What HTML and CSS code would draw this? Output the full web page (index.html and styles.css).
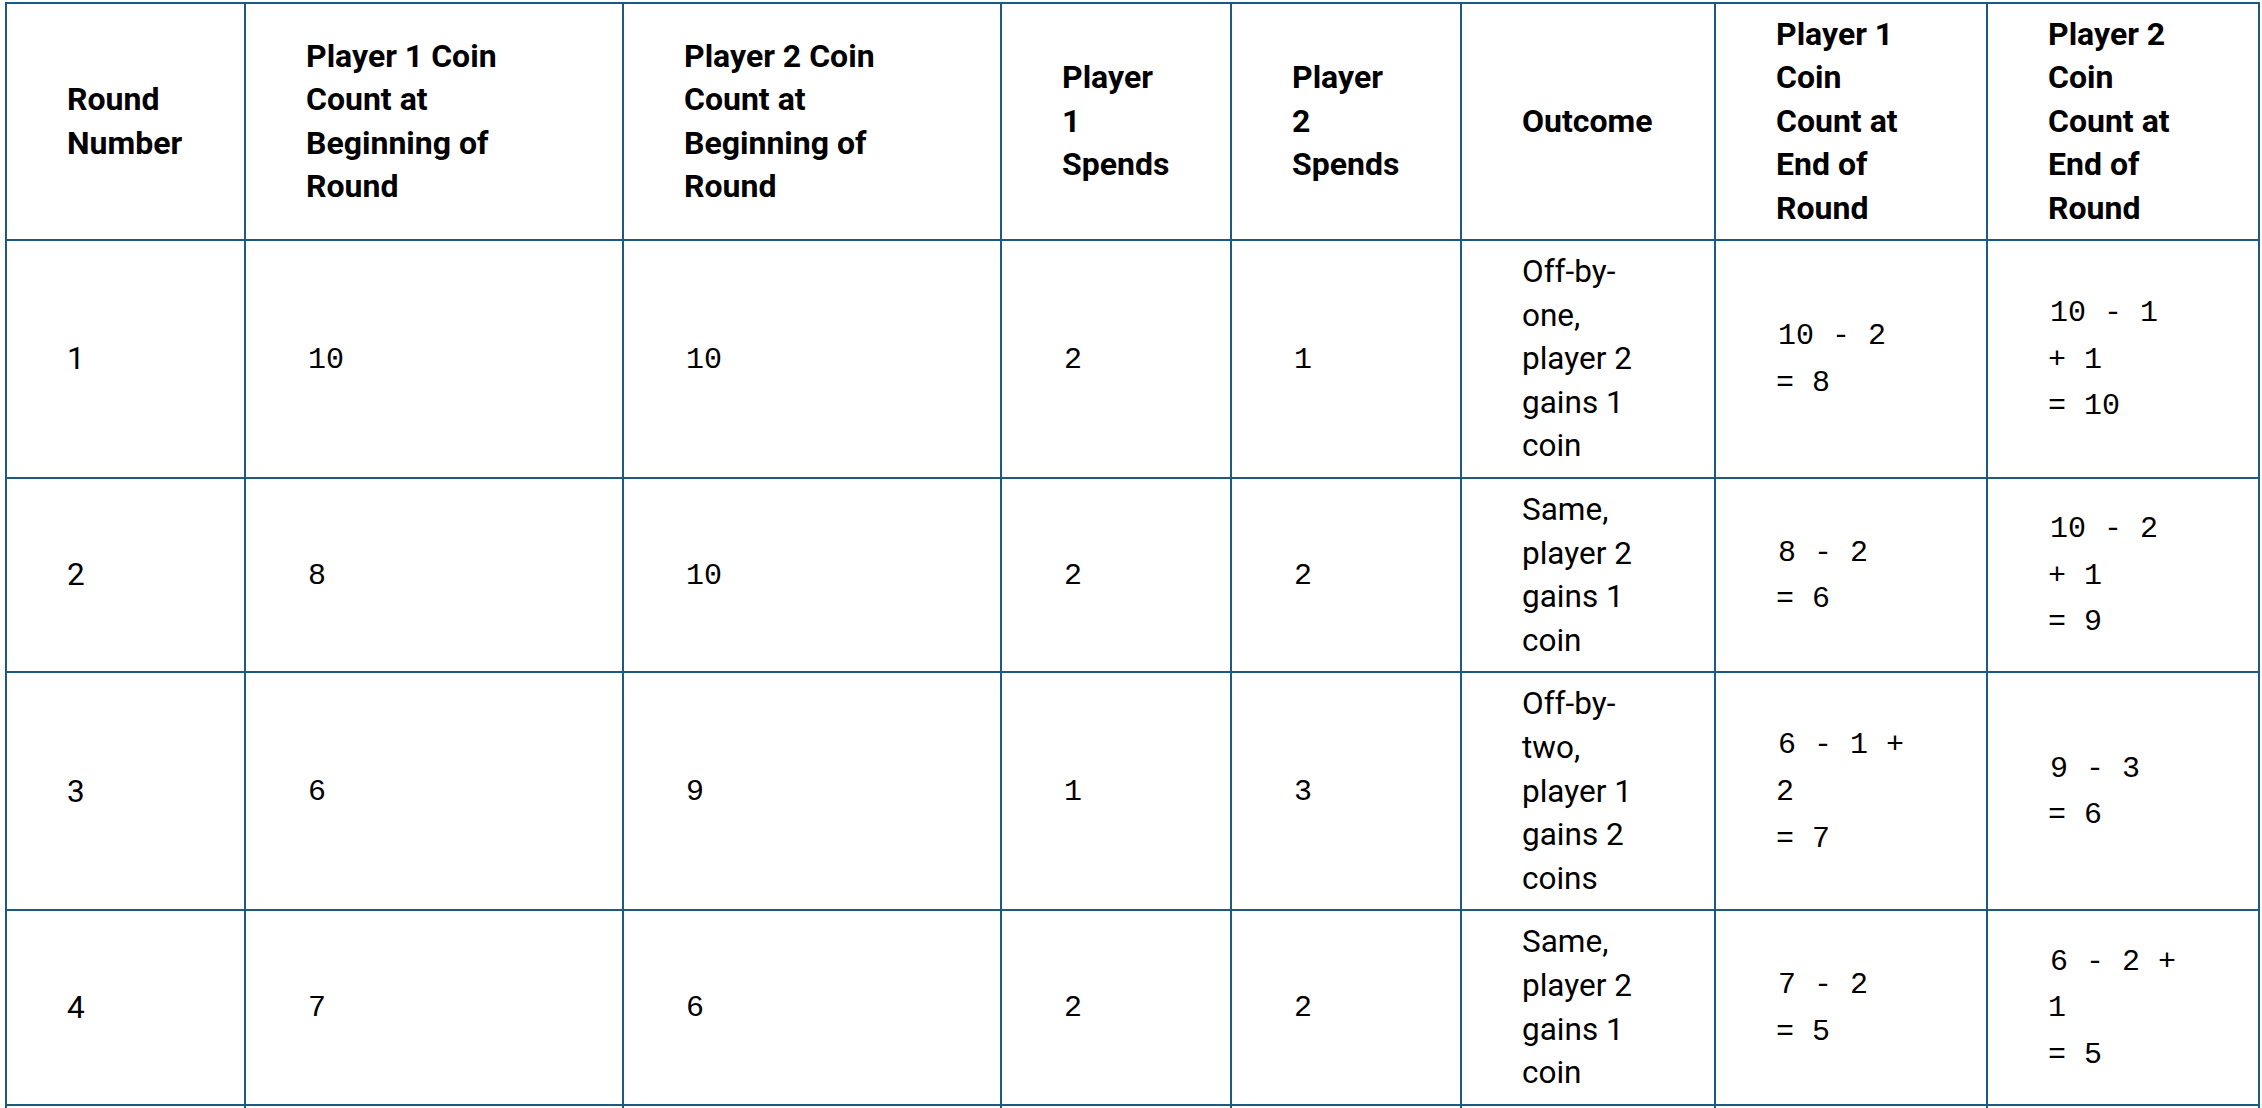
FILE: index.html
```html
<!DOCTYPE html>
<html lang="en">
<head>
<meta charset="utf-8">
<title>Coin rounds</title>
<link rel="stylesheet" href="styles.css">
</head>
<body>
<table class="rounds">
  <colgroup>
    <col class="c-round">
    <col class="c-begin">
    <col class="c-begin">
    <col class="c-spend">
    <col class="c-spend">
    <col class="c-outcome">
    <col class="c-end">
    <col class="c-end">
  </colgroup>
  <thead>
    <tr>
      <th>Round Number</th>
      <th>Player 1 Coin Count at Beginning of Round</th>
      <th>Player 2 Coin Count at Beginning of Round</th>
      <th>Player 1 Spends</th>
      <th>Player 2 Spends</th>
      <th>Outcome</th>
      <th>Player 1 Coin Count at End of Round</th>
      <th>Player 2 Coin Count at End of Round</th>
    </tr>
  </thead>
  <tbody>
    <tr>
      <td>1</td>
      <td><code>10</code></td>
      <td><code>10</code></td>
      <td><code>2</code></td>
      <td><code>1</code></td>
      <td>Off-by-one, player 2 gains 1 coin</td>
      <td><code>10 - 2<br>= 8</code></td>
      <td><code>10 - 1<br>+ 1<br>= 10</code></td>
    </tr>
    <tr>
      <td>2</td>
      <td><code>8</code></td>
      <td><code>10</code></td>
      <td><code>2</code></td>
      <td><code>2</code></td>
      <td>Same, player 2 gains 1 coin</td>
      <td><code>8 - 2<br>= 6</code></td>
      <td><code>10 - 2<br>+ 1<br>= 9</code></td>
    </tr>
    <tr>
      <td>3</td>
      <td><code>6</code></td>
      <td><code>9</code></td>
      <td><code>1</code></td>
      <td><code>3</code></td>
      <td>Off-by-two, player 1 gains 2 coins</td>
      <td><code>6 - 1 +<br>2<br>= 7</code></td>
      <td><code>9 - 3<br>= 6</code></td>
    </tr>
    <tr>
      <td>4</td>
      <td><code>7</code></td>
      <td><code>6</code></td>
      <td><code>2</code></td>
      <td><code>2</code></td>
      <td>Same, player 2 gains 1 coin</td>
      <td><code>7 - 2<br>= 5</code></td>
      <td><code>6 - 2 +<br>1<br>= 5</code></td>
    </tr>
    <tr class="next-row">
      <td></td>
      <td></td>
      <td></td>
      <td></td>
      <td></td>
      <td></td>
      <td></td>
      <td></td>
    </tr>
  </tbody>
</table>
</body>
</html>
```

FILE: styles.css
```css
html, body {
  margin: 0;
  padding: 0;
  background: #ffffff;
}

body {
  font-family: Roboto, "Liberation Sans", sans-serif;
  color: #000000;
}

.rounds {
  border-collapse: collapse;
  table-layout: fixed;
  width: 2254px;
  margin: 2px 0 0 5px;
}

.c-round { width: 239px; }
.c-begin { width: 378px; }
.c-spend { width: 230px; }
.c-outcome { width: 254px; }
.c-end { width: 272px; }

.rounds th,
.rounds td {
  border: 2px solid #1b5b82;
  padding: 9px 60px;
  vertical-align: middle;
  text-align: left;
  line-height: 43.6px;
}

.rounds th {
  font-weight: 700;
  font-size: 32px;
  line-height: 43.4px;
}

.rounds td {
  font-weight: 400;
  font-size: 31.5px;
}

.rounds .next-row td {
  height: 40px;
}

.rounds code {
  font-family: "Liberation Mono", "DejaVu Sans Mono", monospace;
  font-size: 30px;
  line-height: 43.6px;
  padding-left: 2px;
}
```
